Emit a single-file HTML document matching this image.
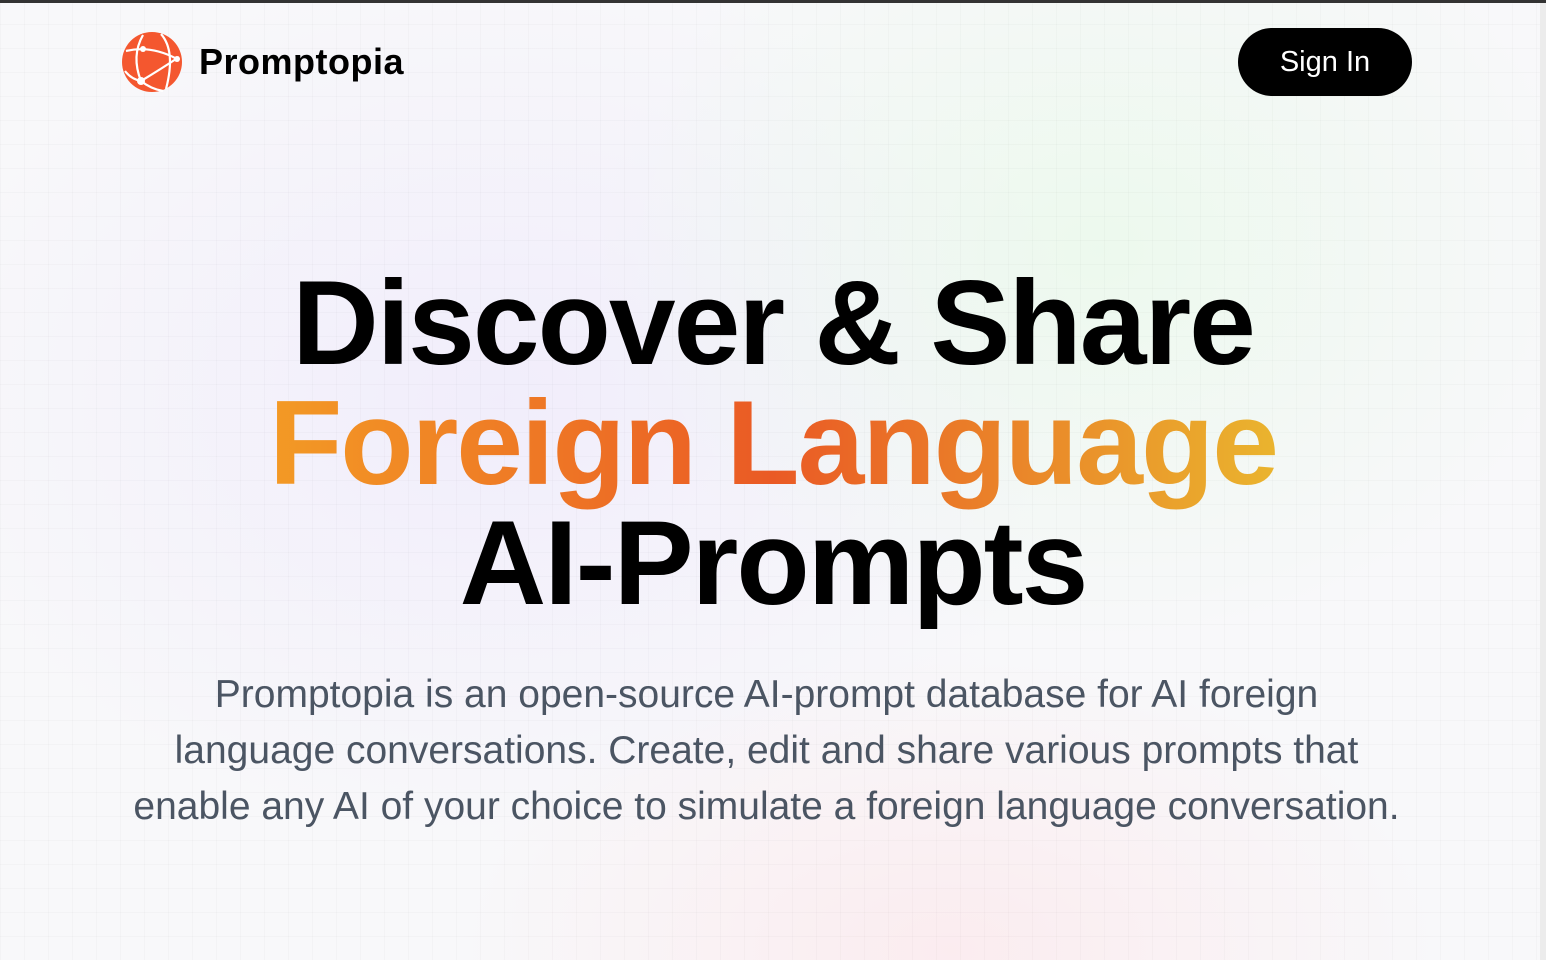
<!DOCTYPE html>
<html><head><meta charset="utf-8"><style>
html,body{margin:0;padding:0;width:1546px;height:960px;overflow:hidden;font-family:"Liberation Sans",sans-serif}
body{background:
radial-gradient(ellipse 500px 400px at 1100px 250px,rgba(225,250,225,.5),transparent),
radial-gradient(ellipse 600px 450px at 500px 400px,rgba(236,230,252,.6),transparent),
radial-gradient(ellipse 500px 300px at 950px 950px,rgba(253,228,232,.6),transparent),
#f8f8fa;position:relative}
.grid{position:absolute;inset:0;background-image:linear-gradient(rgba(0,0,0,.02) 1px,transparent 1px),linear-gradient(90deg,rgba(0,0,0,.02) 1px,transparent 1px);background-size:24px 24px}
.top{position:absolute;left:0;top:0;width:1546px;height:3px;background:#333}
.sb{position:absolute;right:0;top:3px;width:6px;height:957px;background:#ececec}
.logo{position:absolute;left:121px;top:31px}
.brand{position:absolute;left:199px;top:41px;font-size:36px;font-weight:bold;color:#000;letter-spacing:.5px}
.btn{position:absolute;left:1238px;top:28px;width:174px;height:68px;border-radius:34px;background:#000;color:#fff;font-size:29px;line-height:68px;text-align:center}
h1{position:absolute;left:0;width:1546px;top:263px;margin:0;text-align:center;font-size:120px;line-height:120px;font-weight:bold;letter-spacing:-2px;color:#000}
.g{background:linear-gradient(90deg,#f39a25,#ea5a25 50%,#eab42e);-webkit-background-clip:text;background-clip:text;color:transparent}
p{position:absolute;left:0;width:1533px;top:667px;margin:0;text-align:center;font-size:39px;line-height:56px;color:#4b5563}
</style></head><body>
<div class="grid"></div>
<div class="top"></div>
<div class="sb"></div>
<svg class="logo" width="62" height="62" viewBox="0 0 62 62">
<circle cx="31" cy="31" r="30" fill="#f4572f"/>
<g fill="none" stroke="#fff" stroke-width="2.2">
<path d="M22 4 Q10 25 20 50"/>
<path d="M5 20 Q30 14 56 28"/>
<path d="M20 50 Q40 38 58 26"/>
<path d="M40 3 Q55 20 45 58"/>
<path d="M20 50 Q30 58 42 60"/>
<path d="M4 40 Q10 48 20 50"/>
</g>
<circle cx="20" cy="50" r="4" fill="#fff"/><circle cx="56" cy="28" r="3" fill="#fff"/><circle cx="22" cy="18" r="3" fill="#fff"/>
</svg>
<div class="brand">Promptopia</div>
<div class="btn">Sign In</div>
<h1>Discover &amp; Share<br><span class="g">Foreign Language</span><br>AI-Prompts</h1>
<p>Promptopia is an open-source AI-prompt database for AI foreign<br>language conversations. Create, edit and share various prompts that<br>enable any AI of your choice to simulate a foreign language conversation.</p>
</body></html>
